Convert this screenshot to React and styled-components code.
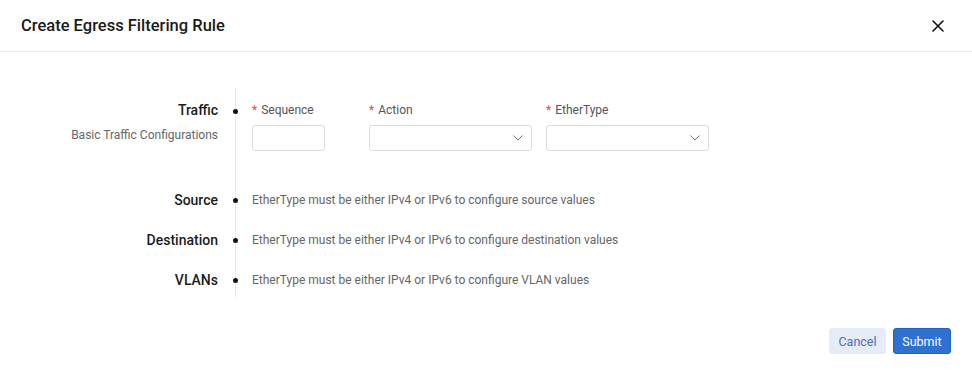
import React from "react";
import styled, { createGlobalStyle } from "styled-components";

const GlobalStyle = createGlobalStyle`
  html, body {
    margin: 0;
    padding: 0;
    background: #ffffff;
    font-family: Roboto, "Noto Sans", sans-serif;
  }
`;

const Modal = styled.div`
  width: 972px;
  height: 374px;
  display: flex;
  flex-direction: column;
  background: #ffffff;
`;

const Header = styled.div`
  height: 52px;
  display: flex;
  align-items: center;
  justify-content: space-between;
  padding: 0 26px 0 21px;
  border-bottom: 1px solid #ececec;
  box-sizing: border-box;
`;

const Title = styled.h2`
  margin: 0;
  font-size: 16.5px;
  font-weight: 500;
  color: #1a1a1a;
`;

const CloseButton = styled.button`
  border: none;
  background: none;
  padding: 0;
  width: 16px;
  height: 16px;
  display: flex;
  align-items: center;
  justify-content: center;
  cursor: pointer;
`;

const Body = styled.div`
  flex: 1;
  padding: 36px 0 0 0;
`;

const Timeline = styled.div`
  display: grid;
  grid-template-columns: 227px 1fr;
`;

const Row = styled.div`
  display: contents;
`;

const LabelCell = styled.div`
  text-align: right;
  padding-right: 9px;
  padding-top: ${p => p.$top}px;
  padding-bottom: ${p => p.$bottom}px;
`;

const ContentCell = styled.div`
  position: relative;
  border-left: 1px solid #e9e9e9;
  margin-left: 8px;
  padding-left: 16px;
  padding-top: ${p => p.$top}px;
  padding-bottom: ${p => p.$bottom}px;
  &::before {
    content: "";
    position: absolute;
    left: -3px;
    top: ${p => p.$dot}px;
    width: 5px;
    height: 5px;
    border-radius: 50%;
    background: #111;
  }
`;

const SectionName = styled.div`
  font-size: 14px;
  font-weight: 500;
  color: #1c1c1c;
  line-height: 20px;
`;

const SectionHint = styled.div`
  margin-top: 6px;
  font-size: 12px;
  color: #666;
  line-height: 18px;
`;

const Fields = styled.div`
  display: flex;
  align-items: flex-start;
`;

const Field = styled.div`
  display: flex;
  flex-direction: column;
  width: ${p => p.$width}px;
  margin-right: ${p => p.$gap}px;
`;

const FieldLabel = styled.label`
  font-size: 12px;
  color: #555;
  line-height: 20px;
  margin-bottom: 5px;
  span {
    color: #e5484d;
    margin-right: 4px;
  }
`;

const TextInput = styled.input`
  box-sizing: border-box;
  width: ${p => p.$width}px;
  height: 26px;
  border: 1px solid #dcdcdc;
  border-radius: 3px;
  outline: none;
  padding: 0 8px;
  font-family: inherit;
`;

const SelectBox = styled.div`
  box-sizing: border-box;
  width: 100%;
  height: 26px;
  border: 1px solid #dcdcdc;
  border-radius: 3px;
  display: flex;
  align-items: center;
  justify-content: flex-end;
  padding-right: 8px;
`;

const Message = styled.div`
  font-size: 12px;
  color: #666;
  line-height: 20px;
`;

const Footer = styled.div`
  display: flex;
  justify-content: flex-end;
  gap: 7px;
  padding: 0 21px 20px 0;
`;

const Button = styled.button`
  box-sizing: border-box;
  height: 26px;
  width: ${p => p.$w}px;
  padding: 0;
  border-radius: 3px;
  font-family: inherit;
  font-size: 12.5px;
  cursor: pointer;
  border: 1px solid ${p => (p.$primary ? "#2a62b8" : "#e6ecf7")};
  background: ${p => (p.$primary ? "#3070d0" : "#e6ecf7")};
  color: ${p => (p.$primary ? "#ffffff" : "#4d6fae")};
`;

const Chevron = () => (
  <svg width="10" height="6" viewBox="0 0 10 6" fill="none">
    <path d="M0.5 0.5L5 5L9.5 0.5" stroke="#777" strokeWidth="1" />
  </svg>
);

const CloseIcon = () => (
  <svg width="12" height="12" viewBox="0 0 12 12">
    <path d="M1 1L11 11M11 1L1 11" stroke="#111" strokeWidth="1.6" strokeLinecap="round" />
  </svg>
);

const sections = [
  { name: "Source", text: "EtherType must be either IPv4 or IPv6 to configure source values" },
  { name: "Destination", text: "EtherType must be either IPv4 or IPv6 to configure destination values" },
  { name: "VLANs", text: "EtherType must be either IPv4 or IPv6 to configure VLAN values" },
];

export default function App() {
  return (
    <>
      <GlobalStyle />
      <Modal>
        <Header>
          <Title>Create Egress Filtering Rule</Title>
          <CloseButton aria-label="Close">
            <CloseIcon />
          </CloseButton>
        </Header>
        <Body>
          <Timeline>
            <Row>
              <LabelCell $top={12} $bottom={39}>
                <SectionName>Traffic</SectionName>
                <SectionHint>Basic Traffic Configurations</SectionHint>
              </LabelCell>
              <ContentCell $top={12} $bottom={39} $dot={21}>
                <Fields>
                  <Field $width={73} $gap={44}>
                    <FieldLabel><span>*</span>Sequence</FieldLabel>
                    <TextInput $width={73} />
                  </Field>
                  <Field $width={163} $gap={14}>
                    <FieldLabel><span>*</span>Action</FieldLabel>
                    <SelectBox><Chevron /></SelectBox>
                  </Field>
                  <Field $width={163} $gap={0}>
                    <FieldLabel><span>*</span>EtherType</FieldLabel>
                    <SelectBox><Chevron /></SelectBox>
                  </Field>
                </Fields>
              </ContentCell>
            </Row>
            {sections.map((s, i) => (
              <Row key={s.name}>
                <LabelCell $top={0} $bottom={i === sections.length - 1 ? 7 : 20}>
                  <SectionName>{s.name}</SectionName>
                </LabelCell>
                <ContentCell $top={0} $bottom={i === sections.length - 1 ? 7 : 20} $dot={8}>
                  <Message>{s.text}</Message>
                </ContentCell>
              </Row>
            ))}
          </Timeline>
        </Body>
        <Footer>
          <Button $w={57}>Cancel</Button>
          <Button $primary $w={58}>Submit</Button>
        </Footer>
      </Modal>
    </>
  );
}
